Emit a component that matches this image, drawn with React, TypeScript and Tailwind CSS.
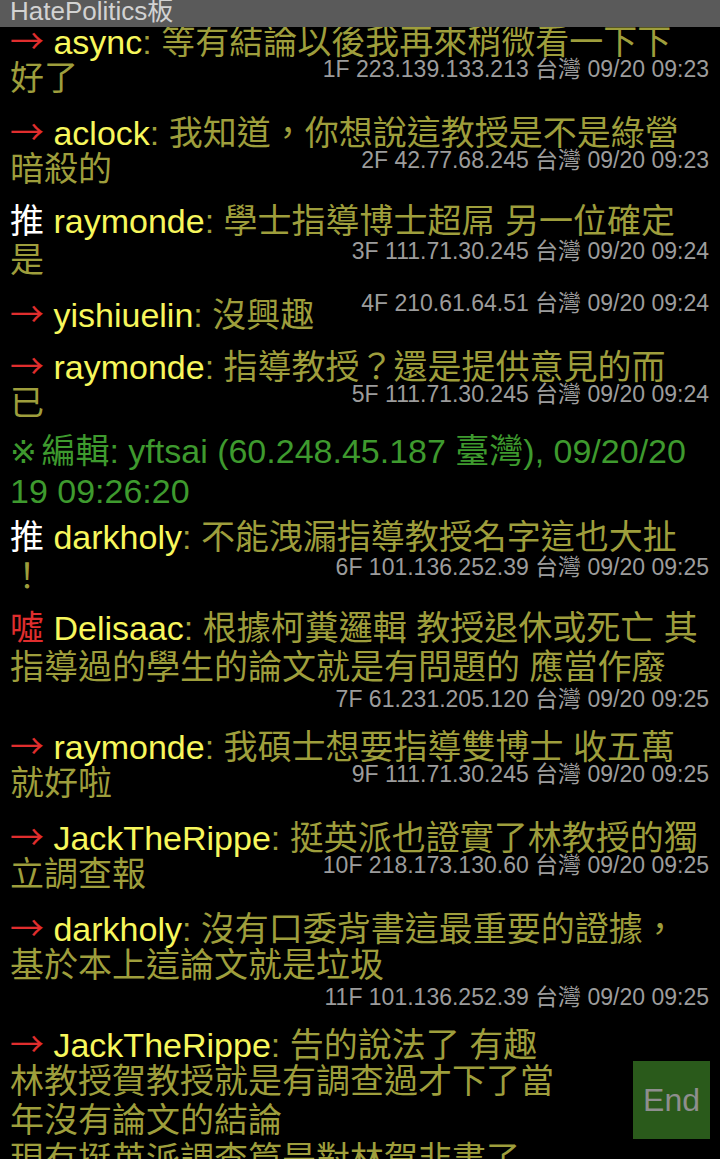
import React from "react";

type Comment = {
  tag: "→" | "推" | "噓";
  user: string;
  lines: string[];
  meta?: string;
  metaOwnLine?: boolean;
};

const comments: Comment[] = [
  { tag: "→", user: "async", lines: ["等有結論以後我再來稍微看一下下", "好了"], meta: "1F 223.139.133.213 台灣 09/20 09:23" },
  { tag: "→", user: "aclock", lines: ["我知道，你想說這教授是不是綠營", "暗殺的"], meta: "2F 42.77.68.245 台灣 09/20 09:23" },
  { tag: "推", user: "raymonde", lines: ["學士指導博士超屌 另一位確定", "是"], meta: "3F 111.71.30.245 台灣 09/20 09:24" },
  { tag: "→", user: "yishiuelin", lines: ["沒興趣"], meta: "4F 210.61.64.51 台灣 09/20 09:24" },
  { tag: "→", user: "raymonde", lines: ["指導教授？還是提供意見的而", "已"], meta: "5F 111.71.30.245 台灣 09/20 09:24" },
];

const comments2: Comment[] = [
  { tag: "推", user: "darkholy", lines: ["不能洩漏指導教授名字這也大扯", "！"], meta: "6F 101.136.252.39 台灣 09/20 09:25" },
  {
    tag: "噓",
    user: "Delisaac",
    lines: ["根據柯糞邏輯 教授退休或死亡 其", "指導過的學生的論文就是有問題的 應當作廢"],
    meta: "7F 61.231.205.120 台灣 09/20 09:25",
    metaOwnLine: true,
  },
  { tag: "→", user: "raymonde", lines: ["我碩士想要指導雙博士 收五萬", "就好啦"], meta: "9F 111.71.30.245 台灣 09/20 09:25" },
  { tag: "→", user: "JackTheRippe", lines: ["挺英派也證實了林教授的獨", "立調查報"], meta: "10F 218.173.130.60 台灣 09/20 09:25" },
  {
    tag: "→",
    user: "darkholy",
    lines: ["沒有口委背書這最重要的證據，", "基於本上這論文就是垃圾"],
    meta: "11F 101.136.252.39 台灣 09/20 09:25",
    metaOwnLine: true,
  },
  {
    tag: "→",
    user: "JackTheRippe",
    lines: ["告的說法了 有趣", "林教授賀教授就是有調查過才下了當", "年沒有論文的結論", "現有挺英派調查篇是對林賀非書了"],
  },
];

function Tag({ tag }: { tag: Comment["tag"] }) {
  if (tag === "→") {
    return (
      <span className="inline-block w-[34px] text-[#e02e2e] font-['Noto_Sans_CJK_TC',sans-serif]">→</span>
    );
  }
  if (tag === "噓") {
    return <span className="text-[#e02e2e]">噓</span>;
  }
  return <span className="text-white">推</span>;
}

function Meta({ text }: { text: string }) {
  return <span className="text-[23px] leading-[21px] text-[#9c9c9c] shrink-0">{text}</span>;
}

function CommentRow({ c }: { c: Comment }) {
  const last = c.lines.length - 1;
  return (
    <div className="mb-[13px]">
      {c.lines.map((line, i) => {
        const content =
          i === 0 ? (
            <span>
              <Tag tag={c.tag} /> <span className="text-[#f7f75c]">{c.user}</span>: {line}
            </span>
          ) : (
            <span>{line}</span>
          );
        if (i === last && c.meta && !c.metaOwnLine) {
          return (
            <div key={i} className="flex justify-between items-start h-[39px]">
              {content}
              <Meta text={c.meta} />
            </div>
          );
        }
        return (
          <div key={i} className="h-[39px]">
            {content}
          </div>
        );
      })}
      {c.meta && c.metaOwnLine && (
        <div className="h-[25px] text-right text-[23px] leading-[25px] text-[#9c9c9c]">{c.meta}</div>
      )}
    </div>
  );
}

export default function App() {
  return (
    <div className="relative w-[720px] h-[1159px] overflow-hidden bg-black font-['Liberation_Sans','Noto_Sans_CJK_TC',sans-serif]">
      <div className="pt-[20px] pl-[10px] pr-[11px] text-[34px] leading-[39px] text-[#9e9e3c] whitespace-nowrap">
        {comments.map((c, i) => (
          <CommentRow key={i} c={c} />
        ))}
        <div className="-mt-[5px] mb-[7px] leading-[40px] text-[#3e9a2e]">
          <div className="h-[40px]">
            <span className="inline-block w-[22px] text-[32px] font-['DejaVu_Sans',sans-serif]">※</span> 編輯: yftsai (60.248.45.187 臺灣), 09/20/20
          </div>
          <div className="h-[40px]">19 09:26:20</div>
        </div>
        {comments2.map((c, i) => (
          <CommentRow key={i} c={c} />
        ))}
      </div>

      <div className="absolute top-0 inset-x-0 h-[27px] overflow-hidden bg-[#5a5a5a] pl-[10px] text-[26px] leading-[22px] text-[#d2d2d2]">
        HatePolitics板
      </div>

      <button className="absolute left-[633px] top-[1061px] w-[77px] h-[78px] bg-[#2a5a1b] text-[32px] text-[#8e8e8e] flex items-center justify-center">
        End
      </button>
    </div>
  );
}
